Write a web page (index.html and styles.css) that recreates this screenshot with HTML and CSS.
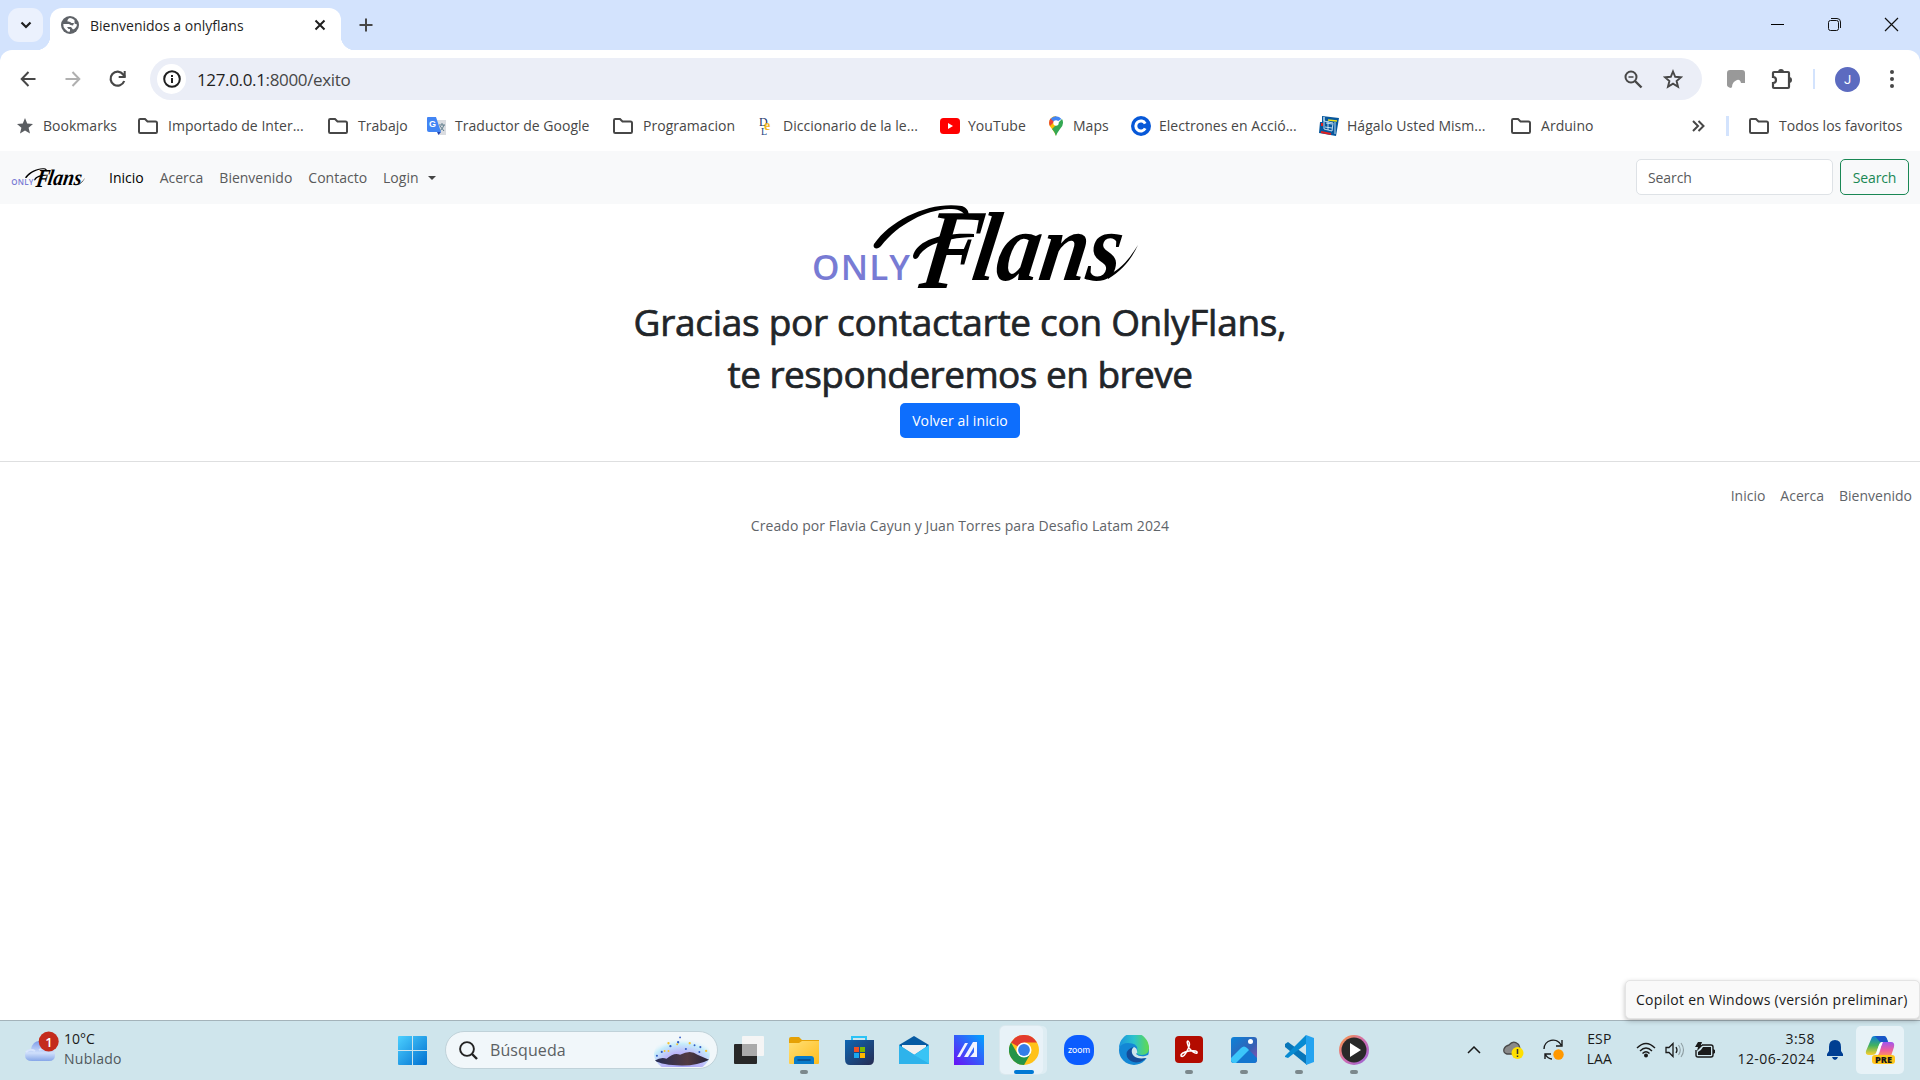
FILE: index.html
```html
<!DOCTYPE html>
<html lang="es">
<head>
<meta charset="utf-8">
<title>Bienvenidos a onlyflans</title>
<link rel="stylesheet" href="styles.css">
</head>
<body>
<svg class="defs" width="0" height="0">
  <defs>
    <symbol id="folder" viewBox="0 0 22 18"><path d="M2 3.200Q2 2 3.200 2H8L10.500 4.500H18.500Q20 4.500 20 6V14.800Q20 16 18.800 16H3.200Q2 16 2 14.800Z" fill="none" stroke="#474747" stroke-width="2"/></symbol>
    <symbol id="onlyflans" viewBox="0 0 328 88">
      <text x="0" y="75.500" font-family="Open Sans, sans-serif" font-weight="600" font-size="35" fill="#787bd4" textLength="98" lengthAdjust="spacing">ONLY</text>
      <g transform="translate(12 0) skewX(-9)" font-family="Liberation Serif, serif" font-style="italic" font-weight="700" fill="#000">
        <text y="84"><tspan x="107" font-size="114" textLength="58" lengthAdjust="spacingAndGlyphs">F</tspan><tspan x="158" y="76" font-size="98" textLength="148" lengthAdjust="spacingAndGlyphs">lans</tspan></text>
      </g>
      <path d="M62 40C80 14 120-3 150 2C157 5 158 10 155 15C152 6 145 5 137 5C114 6 86 20 69 42C66 46 60 45 62 40ZM101 52C104 38 126 28 162 30V33C128 34 112 43 107 52C105 56 101 56 101 52ZM296 75C311 66 320 54 326 41C320 50 312 64 296 71Z" fill="#000"/>
    </symbol>
    <linearGradient id="win" x1="0" y1="0" x2="1" y2="1"><stop offset="0" stop-color="#4cd0ff"/><stop offset="1" stop-color="#006fd0"/></linearGradient>
    <linearGradient id="cloud" x1="0" y1="0" x2="0" y2="1"><stop offset="0" stop-color="#7d9dea"/><stop offset=".6" stop-color="#cfdffb"/><stop offset="1" stop-color="#86a6e8"/></linearGradient>
    <linearGradient id="yellow" x1="0" y1="0" x2="1" y2="1"><stop offset="0" stop-color="#ffdf76"/><stop offset="1" stop-color="#ffbd1d"/></linearGradient>
    <linearGradient id="store" x1="0" y1="0" x2="1" y2="1"><stop offset="0" stop-color="#0e66b3"/><stop offset="1" stop-color="#272c52"/></linearGradient>
    <linearGradient id="asus" x1="1" y1="0" x2="0" y2="1"><stop offset="0" stop-color="#00a6ff"/><stop offset="1" stop-color="#6a10f5"/></linearGradient>
    <linearGradient id="edge" x1="0" y1="0" x2="1" y2="0"><stop offset="0" stop-color="#1b94df"/><stop offset=".5" stop-color="#2bc3cc"/><stop offset="1" stop-color="#62da4c"/></linearGradient>
    <linearGradient id="photo" x1="0" y1="0" x2="1" y2="1"><stop offset="0" stop-color="#0b83d9"/><stop offset=".6" stop-color="#3560b4"/><stop offset="1" stop-color="#9a4fae"/></linearGradient>
    <linearGradient id="media" x1="0" y1="0" x2="1" y2="1"><stop offset="0" stop-color="#ff9a38"/><stop offset=".5" stop-color="#d06cb0"/><stop offset="1" stop-color="#9462d8"/></linearGradient>
    <linearGradient id="cop1" x1="0" y1="0" x2="0" y2="1"><stop offset="0" stop-color="#087ed8"/><stop offset=".5" stop-color="#42b25f"/><stop offset="1" stop-color="#ffd02c"/></linearGradient>
    <linearGradient id="cop2" x1="0" y1="0" x2="0" y2="1"><stop offset="0" stop-color="#a056ee"/><stop offset=".6" stop-color="#ef609b"/><stop offset="1" stop-color="#ff9360"/></linearGradient>
    <radialGradient id="sky" cx=".5" cy=".8" r=".7"><stop offset="0" stop-color="#9f9df2"/><stop offset=".5" stop-color="#bdb9fa"/><stop offset=".8" stop-color="#c5edfb"/><stop offset="1" stop-color="#eef6fa" stop-opacity="0"/></radialGradient>
    <linearGradient id="hill" x1="0" y1="0" x2="1" y2="0"><stop offset="0" stop-color="#262c55"/><stop offset=".6" stop-color="#523a42"/><stop offset="1" stop-color="#25243c"/></linearGradient>
  </defs>
</svg>

<header class="tabstrip">
  <div class="tab-search"><svg width="12" height="8" viewBox="0 0 12 8"><path d="M1.500 1.500L6 6L10.500 1.500" fill="none" stroke="#1f1f1f" stroke-width="2.200"/></svg></div>
  <div class="tab">
    <svg width="18" height="18" viewBox="0 0 18 18"><circle cx="9" cy="9" r="9" fill="#5f6368"/><path d="M9 2Q6 3 6.500 5.500Q9 5 10.500 7H13L12 9.500Q9 9 8 8H2.300Q2 11 4 13L7 15.700L9 15.500V13H7.500L6 11H10L12 13.500Q15.500 12 16 8.500L13.500 7.500V4L11 2.500Z" fill="#fff"/></svg>
    <span class="tab-title">Bienvenidos a onlyflans</span>
    <svg class="tab-close" width="12" height="12" viewBox="0 0 12 12"><path d="M1.500 1.500L10.500 10.500M10.500 1.500L1.500 10.500" stroke="#1f1f1f" stroke-width="2"/></svg>
  </div>
  <svg class="new-tab" width="14" height="14" viewBox="0 0 14 14"><path d="M7 .5V13.500M.5 7H13.500" stroke="#474747" stroke-width="2"/></svg>
  <div class="window-buttons">
    <svg width="15" height="15" viewBox="0 0 15 15"><path d="M1 7.500H14" stroke="#000" stroke-width="1"/></svg>
    <svg width="15" height="15" viewBox="0 0 15 15"><rect x="1.500" y="3.500" width="10" height="10" rx="2" fill="none" stroke="#111"/><path d="M4 1.500H10Q13.500 1.500 13.500 5V11" fill="none" stroke="#111"/></svg>
    <svg width="15" height="15" viewBox="0 0 15 15"><path d="M1 1L14 14M14 1L1 14" stroke="#111" stroke-width="1.200"/></svg>
  </div>
</header>

<div class="chrome">
  <div class="toolbar">
    <svg width="16" height="16" viewBox="0 0 16 16"><path d="M15.500 8H2M8.500 1L1.700 8L8.500 15" fill="none" stroke="#474747" stroke-width="2"/></svg>
    <svg width="16" height="16" viewBox="0 0 16 16"><path d="M.5 8H14M7.500 1L14.300 8L7.500 15" fill="none" stroke="#b0b0b0" stroke-width="2"/></svg>
    <svg width="18" height="18" viewBox="0 0 18 18"><path d="M15.200 11A7 7 0 1 1 14.200 4.500L16 7" fill="none" stroke="#474747" stroke-width="2.200"/><path d="M16.700 1V8H9.700V6H14.700V1Z" fill="#474747"/></svg>
    <div class="omnibox">
      <div class="site-info"><svg width="18" height="18" viewBox="0 0 18 18"><circle cx="9" cy="9" r="7.800" fill="none" stroke="#1f1f1f" stroke-width="2"/><path d="M8 8H10V13H8ZM8 5H10V7H8Z" fill="#1f1f1f"/></svg></div>
      <span class="url"><b>127.0.0.1</b>:8000/exito</span>
      <svg class="magnifier" width="19" height="19" viewBox="0 0 19 19"><circle cx="7" cy="7" r="5.500" fill="none" stroke="#474747" stroke-width="2"/><path d="M11 11L17.500 17.500" stroke="#474747" stroke-width="2.400"/><path d="M4.500 7H9.500" stroke="#474747" stroke-width="1.500"/></svg>
      <svg width="20" height="20" viewBox="0 0 20 20"><path d="M10 2.500L12.200 7.800L18 8.300L13.600 12.100L15 17.800L10 14.700L5 17.800L6.400 12.100L2 8.300L7.800 7.800Z" fill="none" stroke="#474747" stroke-width="1.900"/></svg>
    </div>
    <svg class="ext" width="18" height="18" viewBox="0 0 18 18"><path d="M3 0H15Q18 0 18 3V13H14Q13 9 10 10Q5 12 5 17L4 18Q0 17 0 15V3Q0 0 3 0Z" fill="#999"/></svg>
    <svg class="puzzle" width="22" height="22" viewBox="0 0 22 22"><path d="M2 5Q2 4 3 4H17Q18 4 18 5V19Q18 20 17 20H3Q2 20 2 19V15Q5 15 5 12Q5 9 2 9Z" fill="none" stroke="#474747" stroke-width="2.200"/><path d="M7 4Q7 1 10 1Q13 1 13 4ZM18 9Q21 9 21 12Q21 15 18 15Z" fill="#474747"/></svg>
    <i class="sep"></i>
    <div class="avatar">J</div>
    <svg class="dots" width="6" height="18" viewBox="0 0 6 18"><circle cx="3" cy="2" r="2" fill="#474747"/><circle cx="3" cy="9" r="2" fill="#474747"/><circle cx="3" cy="16" r="2" fill="#474747"/></svg>
  </div>
  <nav class="bookmarks">
    <a class="bm bm-star"><svg width="16" height="16" viewBox="0 0 16 16"><path d="M8 0L10.200 5.500L16 6L11.600 9.800L13 15.500L8 12.400L3 15.500L4.400 9.800L0 6L5.800 5.500Z" fill="#5a5d61"/></svg>Bookmarks</a>
    <a class="bm"><svg class="folder" width="22" height="18"><use href="#folder"/></svg>Importado de Inter...</a>
    <a class="bm"><svg class="folder" width="22" height="18"><use href="#folder"/></svg>Trabajo</a>
    <a class="bm bm-icon"><svg width="20" height="20" viewBox="0 0 20 20"><path d="M8 4H19V19H12Z" fill="#dadce0"/><path d="M12 9H18M15 7V9M17 9Q16 13 12.500 15M13 10L17 15" stroke="#607d8b" fill="none"/><path d="M1 1H9L14 16H2Q0 16 0 14V2Q0 1 1 1Z" fill="#4285f4"/><path d="M10 16H14L11.500 19Z" fill="#2345b0"/><text x="2" y="11" font-family="Liberation Sans" font-weight="700" font-size="9" fill="#fff">G</text></svg>Traductor de Google</a>
    <a class="bm"><svg class="folder" width="22" height="18"><use href="#folder"/></svg>Programacion</a>
    <a class="bm bm-dle"><svg width="15" height="24" viewBox="0 -2 15 24" font-family="Liberation Serif"><text x="1" y="10" font-size="12" fill="#1b356b">D</text><text x="6" y="14" font-size="14" font-weight="700" fill="#f3b71f">e</text><text x="3" y="19" font-size="10" fill="#1b4384">L</text></svg>Diccionario de la le...</a>
    <a class="bm bm-icon"><svg width="20" height="18" viewBox="0 0 20 18"><rect y="1" width="20" height="16" rx="3.500" fill="#f00"/><path d="M8 6V12L13 9Z" fill="#fff"/></svg>YouTube</a>
    <a class="bm bm-dle"><svg width="14" height="20" viewBox="0 0 14 20"><path d="M7 0A7 7 0 0 0 0 7Q0 10 3 13Q6 17 7 20Z" fill="#fbbc04"/><path d="M7 20Q8 17 11 13Q14 10 14 7A7 7 0 0 0 13 3L3 13Q6 16 7 20Z" fill="#34a853"/><path d="M1 3.500L6 7L12.500 3A7 7 0 0 0 1.500 3Z" fill="#4285f4"/><path d="M1.600 2.600L5 6L1 10Q-1 6 1.600 2.600Z" fill="#ea4335"/><circle cx="7" cy="7" r="2.700" fill="#fff"/></svg>Maps</a>
    <a class="bm bm-icon"><svg width="20" height="20" viewBox="0 0 20 20"><circle cx="10" cy="10" r="10" fill="#0758d8"/><path d="M14.200 7.600A5 5 0 1 0 14.200 12.400" fill="none" stroke="#fff" stroke-width="3"/></svg>Electrones en Acció...</a>
    <a class="bm bm-icon"><svg width="20" height="20" viewBox="0 0 20 20"><path d="M3 0L20 2L17 20L0 17L1 6H3Z" fill="#07579c"/><path d="M9 4L18 5" stroke="#f2e21a" stroke-width="1.500"/><path d="M2 16L12 18M3 7V10" stroke="#e02020" stroke-width="2"/><path d="M5 1V5L14 7L13 15L5 13ZM7 7L13 8M6 11L13 12M9 5V14M16 6V18" stroke="#d3e9f7" fill="none" stroke-width=".9"/></svg>Hágalo Usted Mism...</a>
    <a class="bm"><svg class="folder" width="22" height="18"><use href="#folder"/></svg>Arduino</a>
    <svg class="more" width="13" height="12" viewBox="0 0 13 12"><path d="M1 1L6 6L1 11M6.500 1L11.500 6L6.500 11" fill="none" stroke="#474747" stroke-width="2"/></svg>
    <i class="sep wide"></i>
    <a class="bm"><svg class="folder" width="22" height="18"><use href="#folder"/></svg>Todos los favoritos</a>
  </nav>
</div>

<main class="page">
  <nav class="navbar">
    <svg class="brand" width="75" height="20"><use href="#onlyflans"/></svg>
    <a class="active">Inicio</a><a>Acerca</a><a>Bienvenido</a><a>Contacto</a><a class="dropdown">Login</a>
    <form class="search"><div class="field">Search</div><div class="submit">Search</div></form>
  </nav>
  <section class="hero">
    <svg class="logo" width="328" height="88"><use href="#onlyflans"/></svg>
    <h1><span class="line one">Gracias por contactarte con OnlyFlans,</span><span class="line two">te responderemos en breve</span></h1>
    <a class="button">Volver al inicio</a>
  </section>
  <footer class="footer">
    <div class="links"><a>Inicio</a><a>Acerca</a><a>Bienvenido</a></div>
    <p>Creado por Flavia Cayun y Juan Torres para Desafio Latam 2024</p>
  </footer>
  <div class="tooltip">Copilot en Windows (versión preliminar)</div>
</main>

<div class="taskbar">
  <div class="weather">
    <svg width="40" height="40" viewBox="0 0 40 40"><path d="M7 31Q0 31 0 25Q0 19 6 19Q8 10 16 11Q22 12 23 18Q30 18 30 25Q30 31 24 31Z" fill="url(#cloud)"/><path d="M1 22Q5 18 10 21M14 20Q20 16 27 20" stroke="#eaf2ff" stroke-width="2" fill="none" opacity=".6"/><circle cx="23.700" cy="11.500" r="10" fill="#c42b1c"/><text x="20.300" y="16.500" font-family="Open Sans" font-weight="600" font-size="13" fill="#fff">1</text></svg>
    <div><span>10°C</span><span class="muted">Nublado</span></div>
  </div>
  <svg class="start" width="29" height="29" viewBox="0 0 29 29"><path d="M1 0H14V14H0V1Q0 0 1 0ZM15 0H28Q29 0 29 1V14H15ZM0 15H14V29H1Q0 29 0 28ZM15 15H29V28Q29 29 28 29H15Z" fill="url(#win)"/></svg>
  <div class="searchbox">
    <svg width="19" height="19" viewBox="0 0 19 19"><circle cx="8" cy="8" r="6.900" fill="none" stroke="#222" stroke-width="1.900"/><path d="M13 13L18 18" stroke="#222" stroke-width="2.400"/></svg>
    <span>Búsqueda</span>
    <svg class="scene" width="56" height="34" viewBox="0 0 58 34"><ellipse cx="29" cy="21" rx="29" ry="20" fill="url(#sky)"/><path d="M1 28Q7 24 13 26Q21 19 27 22Q38 16 45 22L57 27Q46 33 29 33Q8 33 1 28Z" fill="url(#hill)"/><g fill="#315bc4"><circle cx="17" cy="13" r="1.200"/><circle cx="25" cy="9" r="1.200"/><circle cx="42" cy="12" r="1"/><circle cx="48" cy="14" r="1.100"/><circle cx="33" cy="16" r="1.100"/><circle cx="8" cy="19" r="1.100"/><circle cx="3" cy="23" r="1.100"/><circle cx="47" cy="19" r="1"/><circle cx="27" cy="4" r=".9"/></g><g fill="#f4c233"><circle cx="15" cy="10" r="1.200"/><circle cx="24" cy="11" r="1"/><circle cx="37" cy="10" r="1.200"/><circle cx="54" cy="18" r="1.200"/><circle cx="15" cy="18" r="1"/><circle cx="11" cy="18" r="1"/></g></svg>
  </div>
  <div class="apps">
    <div class="app"><svg width="32" height="30" viewBox="0 0 32 30"><rect x="1" y="9" width="23" height="20" rx="1" fill="#282828"/><rect x="9" y="1" width="22" height="20" rx="1" fill="#f5f5f5"/><path d="M9 9H24V21H9Z" fill="#aaa"/></svg></div>
    <div class="app running"><svg width="30" height="30" viewBox="0 0 30 30"><path d="M0 4Q0 2 2 2H10L13 5H30V12H0Z" fill="#e5a106"/><path d="M0 8H10L13 6H30V28Q30 29 29 29H1Q0 29 0 28Z" fill="url(#yellow)"/><path d="M5 29V24Q5 21 8 21H22Q25 21 25 24V29Z" fill="#087bca"/><path d="M9 25H21" stroke="#0a4a85" stroke-width="1.500" stroke-linecap="round"/></svg></div>
    <div class="app"><svg width="30" height="30" viewBox="0 0 30 30"><path d="M8 6V2H22V6" fill="none" stroke="#2bc3f6" stroke-width="2"/><path d="M1 5H30V24Q30 30 25 30H6Q1 30 1 24Z" fill="url(#store)"/><path d="M10 12H15V17H10Z" fill="#f25022"/><path d="M16 12H21V17H16Z" fill="#7fba00"/><path d="M10 18H15V23H10Z" fill="#19a8ef"/><path d="M16 18H21V23H16Z" fill="#ffb900"/></svg></div>
    <div class="app"><svg width="30" height="30" viewBox="0 0 30 30"><path d="M0 10L15 1L30 10V12H0Z" fill="#075aa2"/><path d="M3 10H27V20H3Z" fill="#f1f1f1"/><path d="M0 10L15 20L30 10V29H0Z" fill="#1590d8"/><path d="M0 10L30 29H0Z" fill="#2eb3eb"/><path d="M15 20L30 10V29Z" fill="#39c4f5"/></svg></div>
    <div class="app"><svg width="30" height="30" viewBox="0 0 30 30"><path d="M0 0H30V30H0Z" fill="url(#asus)"/><path d="M3 22L11 8H14L6 22ZM10 22L19 7H23V22H20V12L14 22Z" fill="#f2f4ff"/><path d="M16 22L21 16V22Z" fill="#f2f4ff"/></svg></div>
    <div class="app current"><svg width="30" height="30" viewBox="0 0 30 30"><circle cx="15" cy="15" r="15" fill="#ffc219"/><path d="M15 15L2 7.500A15 15 0 0 1 28 7.500H15Z" fill="#e33b2e"/><path d="M2 7.500A15 15 0 0 0 15 30L21.500 18.800L15 15L8.500 18.800Z" fill="#249447"/><circle cx="15" cy="15" r="7.500" fill="#fff"/><circle cx="15" cy="15" r="5.900" fill="#347de8"/></svg></div>
    <div class="app"><svg width="30" height="30" viewBox="0 0 30 30"><rect width="30" height="30" rx="13" fill="#0b5cff"/><text x="4" y="18" font-family="Lato" font-size="9" fill="#fff" textLength="22" lengthAdjust="spacingAndGlyphs">zoom</text></svg></div>
    <div class="app"><svg width="30" height="30" viewBox="0 0 30 30"><circle cx="15" cy="15" r="15" fill="#1387d5"/><path d="M0 13A15 15 0 0 1 30 13Q30 20 23 20Q17 20 18 17Q20 8 9 8Q3 8 0 13Z" fill="url(#edge)"/><path d="M12 13Q6 16 8 22Q12 29 21 27Q26 25 28 22L26 21Q16 25 13 18Q12 15 14 12Z" fill="#154c99"/><path d="M18 16Q19 18 17 19Q20 22 26 21L29 20L30 23L27 23Q15 25 13 18Q12 14 15 12Q18 13 18 16Z" fill="#cfe5ec"/></svg></div>
    <div class="app running"><svg width="30" height="30" viewBox="0 0 30 30"><rect x="1" y="1" width="28" height="27" rx="4" fill="#b30b00"/><path d="M14 6Q17 8 14 14Q10 23 7 21Q6 18 15 16Q24 15 23 18Q20 19 15 13Q12 6 14 6Z" fill="none" stroke="#fff" stroke-width="1.500"/></svg></div>
    <div class="app running"><svg width="30" height="30" viewBox="0 0 30 30"><rect x="2" y="2" width="26" height="26" rx="3" fill="url(#photo)"/><path d="M2 23L12 13Q15 10 18 13L28 23V25Q28 28 25 28H5Q2 28 2 25Z" fill="#1476cf"/><path d="M2 23L12 13Q15 10 18 13L20 15L7 28H5Q2 28 2 25Z" fill="#3cc6fa"/><circle cx="21.500" cy="6.500" r="2.500" fill="#fff"/></svg></div>
    <div class="app running"><svg width="30" height="30" viewBox="0 0 30 30"><path d="M1 9L4 7L23 21V30L1 12Z" fill="#0876b9"/><path d="M1 21L22 0V9L4 23L1 22Z" fill="#088bd2"/><path d="M22 0L30 3V27L22 30Z" fill="#24a3f0"/></svg></div>
    <div class="app running"><svg width="30" height="30" viewBox="0 0 30 30"><circle cx="15" cy="15" r="15" fill="url(#media)"/><circle cx="15" cy="15" r="12.500" fill="#292929"/><path d="M11 8L22 15L11 22Z" fill="#fff"/></svg></div>
  </div>
  <div class="tray">
    <svg class="up" width="14" height="8" viewBox="0 0 14 8"><path d="M1 7L7 1L13 7" fill="none" stroke="#1a1a1a" stroke-width="1.500"/></svg>
    <svg class="drive" width="22" height="20" viewBox="0 0 22 20"><path d="M4 14Q0 13 1 9Q2 6 6 5Q10 0 15 4Q17 6 17 11L12 14Z" fill="#898989" stroke="#4a4a4a" stroke-width="1.300"/><circle cx="14.500" cy="13" r="6" fill="#ffe000"/><path d="M14.500 9V14M14.500 15.500V17" stroke="#333" stroke-width="1.500"/></svg>
    <svg class="sync" width="22" height="22" viewBox="0 0 22 22"><path d="M1 10A9 9 0 0 1 18 6M19 1V7H13M2 20V15H8M2 15Q5 20 9 20" fill="none" stroke="#1a1a1a" stroke-width="1.400"/><circle cx="15.500" cy="15.500" r="5.200" fill="#ff9800"/></svg>
    <div class="lang"><span>ESP</span><span>LAA</span></div>
    <svg class="wifi" width="20" height="16" viewBox="0 0 20 16"><path d="M1 6Q10-3 19 6M4 9Q10 3 16 9M6.500 11.500Q10 8 13.500 11.500" fill="none" stroke="#1a1a1a" stroke-width="1.400"/><circle cx="10" cy="13.500" r="2" fill="#1a1a1a"/></svg>
    <svg class="sound" width="20" height="16" viewBox="0 0 20 16"><path d="M1 5.500H4L8 1.500V14.500L4 10.500H1Z" fill="none" stroke="#1a1a1a" stroke-width="1.300"/><path d="M11 5Q13 8 11 11" fill="none" stroke="#1a1a1a" stroke-width="1.300"/><path d="M13.500 3Q17 8 13.500 13M16 1Q21 8 16 15" fill="none" stroke="#8e9da2" stroke-width="1.100"/></svg>
    <svg class="battery" width="22" height="18" viewBox="0 0 22 18"><path d="M8 4H17Q19 4 19 6V14Q19 16 17 16H4Q2 16 2 14V9" fill="none" stroke="#1a1a1a" stroke-width="1.400"/><path d="M9 6H17V14H4V11Q7 10 9 6ZM19 8L21 9V12L19 13ZM4 1H8L7 4H9L3 10L4 6H1Z" fill="#1a1a1a"/></svg>
    <div class="clock"><span>3:58</span><span>12-06-2024</span></div>
    <svg class="bell" width="16" height="20" viewBox="0 0 16 20"><path d="M8 0Q14 0 14 7V11L16 14V16H0V14L2 11V7Q2 0 8 0ZM5 17H11Q10 20 8 20Q6 20 5 17Z" fill="#003e92"/></svg>
    <div class="copilot"><svg width="30" height="30" viewBox="0 0 30 30"><path d="M7 2Q8 1 10 1H19Q21 1 22 4L23 7H17Q15 7 14 10L11 18Q10 20 7 20H4Q0 20 1 16Z" fill="url(#cop1)"/><path d="M10 1H19Q21 1 22 4L23 7H15Z" fill="#1755c7"/><path d="M17 7H26Q30 7 29 12L26 21H12Q14 20 15 16Z" fill="url(#cop2)"/><path d="M14 10Q15 7 18 7L13 19H11Z" fill="#fff"/><rect x="7" y="20" width="23" height="9" rx="3" fill="#ffc51b"/><text x="10" y="27.500" font-family="Open Sans" font-weight="800" font-size="8" fill="#181818" textLength="17" lengthAdjust="spacingAndGlyphs">PRE</text></svg></div>
  </div>
</div>
</body>
</html>
```

FILE: styles.css
```css
* { box-sizing: border-box; }
body {
  margin: 0; width: 1920px; height: 1080px; overflow: hidden;
  display: flex; flex-direction: column;
  font: 14px/20px "Open Sans", "Noto Sans", sans-serif;
  color: #474747; background: #fff; white-space: nowrap;
}
svg { display: block; flex: none; }
.defs { position: absolute; }

.tabstrip { height: 50px; flex: none; display: flex; background: #d3e3fd; padding-left: 8px; }
.tab-search { width: 35px; height: 34px; margin: 8px 7px 0 0; border-radius: 11px; background: #ebf1fd; display: flex; align-items: center; justify-content: center; }
.tab { position: relative; width: 291px; height: 42px; margin-top: 8px; padding: 0 15px 8px 11px; border-radius: 12px 12px 0 0; background: #fff; display: flex; align-items: center; color: #1f1f1f; }
.tab::before, .tab::after { content: ""; position: absolute; bottom: 0; width: 14px; height: 14px; }
.tab::before { left: -14px; background: radial-gradient(circle at 0 0, transparent 14px, #fff 14.500px); }
.tab::after { right: -14px; background: radial-gradient(circle at 100% 0, transparent 14px, #fff 14.500px); }
.tab-title { margin: 1px 0 0 11px; }
.tab-close { margin-left: auto; }
.new-tab { margin: 18px 0 0 18px; }
.window-buttons { margin: 17px 21px 0 auto; display: flex; gap: 42px; }

.chrome { height: 101px; flex: none; background: linear-gradient(#d3e3fd 14px, #fff 14px); }
.toolbar { height: 58px; display: flex; align-items: center; background: #fff; border-radius: 12px 12px 0 0; padding: 0 25px 0 20px; }
.toolbar > svg:nth-child(2) { margin-left: 29px; }
.toolbar > svg:nth-child(3) { margin-left: 28px; }
.omnibox { width: 1552px; height: 42px; margin-left: 23px; padding: 0 19px 0 7px; border-radius: 21px; background: #ebeef7; display: flex; align-items: center; }
.site-info { width: 29px; height: 30px; border-radius: 50%; background: #fff; display: flex; align-items: center; justify-content: center; }
.url { margin: 1px 0 0 11px; font-size: 17px; letter-spacing: -.35px; }
.url b { font-weight: 400; color: #1f1f1f; }
.magnifier { margin: 0 20px 0 auto; }
.ext { margin-left: 25px; }
.puzzle { margin-left: 26px; }
.sep { width: 2px; height: 20px; background: #d3e3fd; margin-left: 20px; }
.wide { width: 3px; margin-left: 0; }
.avatar { width: 25px; height: 25px; margin-left: 20px; border-radius: 50%; background: #5c6bc0; color: #fff; text-align: center; font: 13px/25px Roboto, sans-serif; }
.dots { margin-left: auto; }
.bookmarks { height: 36px; display: grid; align-items: center; padding-left: 17px; grid-template-columns: 120px 190px 100px 185px 146px 182px 109px 82px 188px 191px 182px 34px 22px 1fr; letter-spacing: .03px; }
.bm { display: flex; align-items: center; gap: 10px; }
.bm .folder { margin-right: -1px; }
.bm-icon { gap: 8px; }

.page { position: relative; flex: none; height: 869px; }
.navbar { height: 53px; padding: 0 11px; background: #f8f9fa; display: flex; align-items: center; color: #595a5b; }
.brand { margin-right: 23px; }
.navbar a { margin-right: 16px; }
.navbar .active { color: #000; }
.dropdown { display: flex; align-items: center; gap: 9px; }
.dropdown::after { content: ""; border: 4px solid transparent; border-top-color: #444; border-bottom: 0; }
.search { display: flex; gap: 7px; margin: 0 0 1px auto; }
.field, .submit { height: 36px; line-height: 35px; border-radius: 5px; border: 1px solid #dee2e6; padding: 0 11px; letter-spacing: -.1px; }
.field { width: 197px; background: #fff; }
.submit { width: 69px; border-color: #198754; color: #198754; padding: 0; text-align: center; }
.hero { display: flex; flex-direction: column; align-items: center; height: 258px; border-bottom: 1px solid #dedfe0; }
.logo { margin-left: 32px; }
h1 { margin: 4px 0 3px; font-size: 37px; line-height: 52px; font-weight: 500; color: #212529; text-align: center; -webkit-text-stroke: .7px #212529; }
.line { display: block; }
.one { letter-spacing: -.3px; }
.two { letter-spacing: -.55px; }
.button { width: 120px; height: 35px; border-radius: 5px; background: #0d6efd; color: #fff; text-align: center; line-height: 35px; letter-spacing: .12px; }
.footer { padding-top: 24px; color: #5f6469; }
.links { display: flex; justify-content: flex-end; gap: 15px; padding-right: 8px; }
.footer p { margin: 10px 0 0; text-align: center; letter-spacing: .08px; }
.tooltip { position: absolute; right: 0; bottom: 1px; width: 295px; height: 39px; padding-left: 10px; border: 1px solid #e4e4e4; border-radius: 5px; background: #f9f9f9; color: #1a1a1a; line-height: 37px; letter-spacing: .28px; box-shadow: 0 2px 5px rgba(0,0,0,.25); }

.taskbar { flex: none; height: 60px; border-top: 1px solid #a4b3ba; background: #cfe5ec; display: flex; align-items: center; padding-bottom: 1px; color: #1a1a1a; }
.weather { display: flex; width: 373px; margin-left: 25px; align-items: center; }
.weather span, .lang span, .clock span { display: block; }
.weather div { margin: -2px 0 0 -1px; }
.weather .muted { color: #50585c; letter-spacing: .25px; }
.start { margin-right: 18px; }
.searchbox { width: 273px; height: 38px; border-radius: 19px; background: #f1f7fa; border: 1px solid #c0d2d9; display: flex; align-items: center; padding: 0 7px 0 13px; font-size: 16px; color: #5b6063; }
.searchbox span { margin-left: 12px; letter-spacing: .1px; }
.scene { margin-left: auto; }
.apps { display: flex; margin-left: 3px; }
.app { position: relative; width: 55px; height: 48px; display: flex; align-items: center; justify-content: center; }
.running::after, .current::after { content: ""; position: absolute; bottom: 0; width: 8px; height: 4px; border-radius: 2px; background: #7b888c; }
.current::after { width: 20px; background: #0078d4; }
.current::before { content: ""; position: absolute; left: 4px; width: 43px; height: 48px; border-radius: 5px; background: #e8f2f8; box-shadow: 4px 0 0 #deedf3, 0 0 0 1px #dbe8ee; }
.current svg { position: relative; }
.tray { display: flex; align-items: center; margin: 0 16px 0 auto; }
.drive { margin-left: 22px; }
.sync { margin-left: 18px; }
.lang { margin: -2px 0 0 22px; text-align: center; letter-spacing: .1px; }
.wifi { margin-left: 24px; }
.sound { margin-left: 9px; }
.battery { margin-left: 9px; }
.clock { width: 99px; margin-top: -2px; text-align: right; letter-spacing: .45px; }
.bell { margin-left: 12px; }
.copilot { width: 48px; height: 48px; margin-left: 13px; border-radius: 5px; background: #e7f2f7; display: flex; align-items: center; justify-content: center; }
```
